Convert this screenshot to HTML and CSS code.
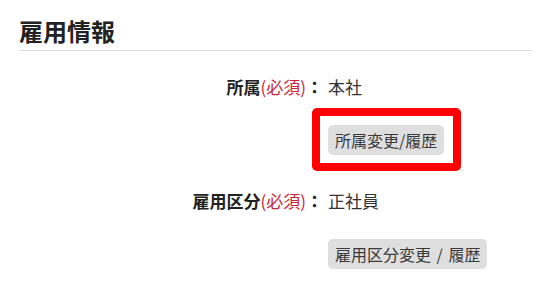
FILE: index.html
```html
<!DOCTYPE html>
<html lang="ja">
<head>
<meta charset="utf-8">
<title>雇用情報</title>
<link rel="stylesheet" href="styles.css">
</head>
<body>
<section class="panel">
  <h2 class="title">雇用情報</h2>
  <div class="field">
    <div class="label">所属<span class="req">(必須)</span>：</div>
    <div class="value">本社</div>
    <div class="actions">
      <span class="mark">
        <button class="btn" type="button">所属変更/履歴</button>
        <span class="highlight"></span>
      </span>
    </div>
  </div>
  <div class="field second">
    <div class="label">雇用区分<span class="req">(必須)</span>：</div>
    <div class="value">正社員</div>
    <div class="actions">
      <button class="btn" type="button">雇用区分変更 / 履歴</button>
    </div>
  </div>
</section>
</body>
</html>
```
FILE: styles.css
```css
html, body {
  margin: 0;
  padding: 0;
  background: #fff;
}
body {
  font-family: "Noto Sans CJK JP", "Noto Sans", sans-serif;
  color: #333;
}
.panel {
  padding: 13px 1px 0 19px;
}
.title {
  margin: 0;
  font-size: 24px;
  line-height: 36px;
  font-weight: 700;
  color: #222;
  padding-bottom: 1px;
  border-bottom: 1px solid #dcdcdc;
}
.field {
  display: grid;
  grid-template-columns: 304px 1fr;
  column-gap: 5px;
  row-gap: 26px;
  margin-top: 24px;
  font-size: 17px;
  line-height: 24px;
}
.field.second {
  margin-top: 34px;
}
.label {
  text-align: right;
  font-weight: 700;
  color: #222;
}
.req {
  font-weight: 400;
  color: #c8283c;
}
.value {
  color: #333;
}
.actions {
  grid-column: 2;
  display: flex;
}
.mark {
  position: relative;
  display: inline-flex;
}
.btn {
  font-family: inherit;
  font-size: 16px;
  line-height: 22px;
  color: #3a3a3a;
  background: #dfdfdf;
  border: none;
  border-radius: 5px;
  padding: 4px 7px;
  margin: 0;
  word-spacing: 2px;
}
.highlight {
  position: absolute;
  top: -17px;
  bottom: -16px;
  left: -16px;
  right: -17px;
  border: 8px solid #f00;
  border-radius: 5px;
  pointer-events: none;
}
```
